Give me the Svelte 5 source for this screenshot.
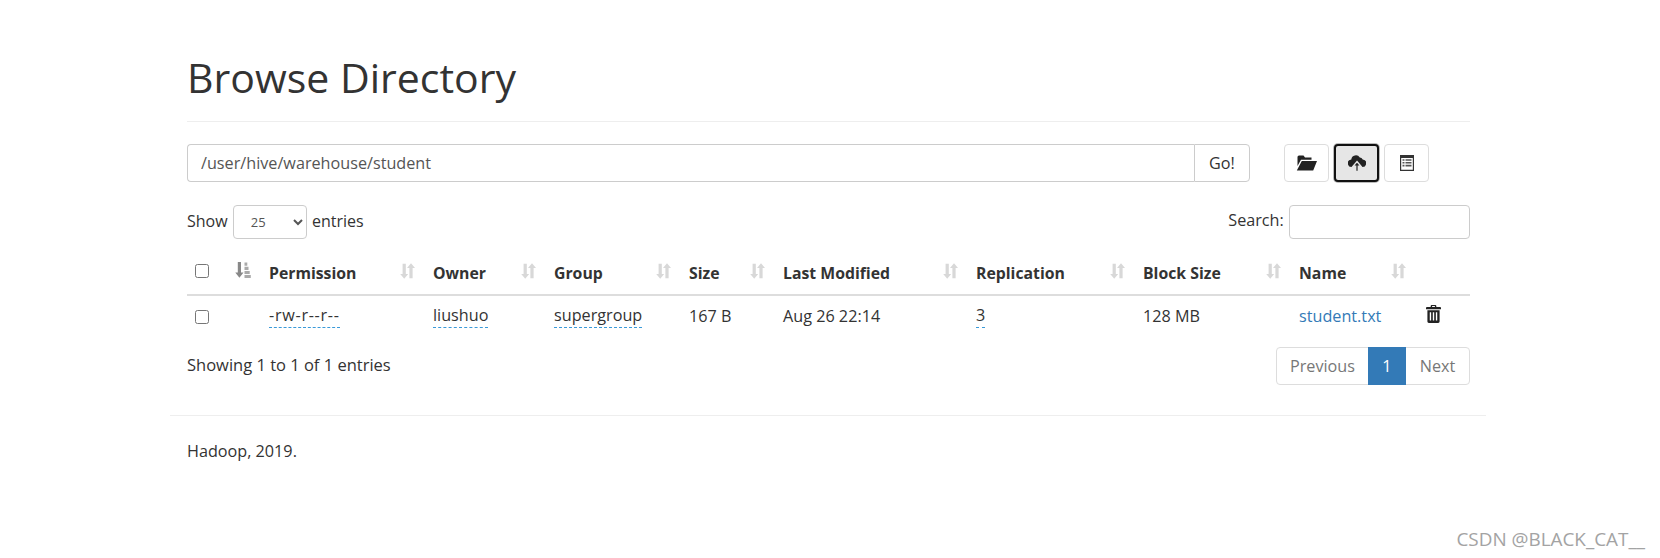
<script>
	const columns = [
		{ label: 'Permission', width: 164 },
		{ label: 'Owner', width: 121 },
		{ label: 'Group', width: 135 },
		{ label: 'Size', width: 94 },
		{ label: 'Last Modified', width: 193 },
		{ label: 'Replication', width: 167 },
		{ label: 'Block Size', width: 156 },
		{ label: 'Name', width: 125 }
	];
</script>

<div class="container">
	<div class="page-header">
		<h1>Browse Directory</h1>
	</div>

	<div class="path-row">
		<div class="input-group">
			<input class="path-input" type="text" value="/user/hive/warehouse/student" />
			<button class="btn go">Go!</button>
		</div>
		<div class="toolbar">
			<button class="btn icon-btn" aria-label="Create directory">
				<svg width="21" height="16" viewBox="0 0 21 16"><path fill="#222" d="M3 0.500h4.500l1.500 2h6.500v2.200H5L1.500 11V2a1.500 1.500 0 0 1 1.500-1.500zM5.800 6H21L17.200 15.500H0.800z" /></svg>
			</button>
			<button class="btn icon-btn active" aria-label="Upload files">
				<svg width="18" height="18" viewBox="0 0 18 18"><path fill="#222" d="M4 13A3.800 3.800 0 0 1 3.300 5.400 4.600 4.600 0 0 1 11.800 3.500A3.700 3.700 0 0 1 14.700 5.400 3.800 3.800 0 0 1 14 13z" /><path fill="#222" stroke="#e6e6e6" stroke-width="1.400" d="M9 7.500l4 4.700H10.300V17.500H7.700V12.200H5z" /></svg>
			</button>
			<button class="btn icon-btn" aria-label="Cut and paste">
				<svg width="14" height="16" viewBox="0 0 14 16"><path fill="#333" fill-rule="evenodd" d="M0 0h14v16H0zM1.200 3v11.800h11.600V3z" /><path fill="#555" d="M2.500 4.200h2v1.600h-2zM5.500 4.200h6v1.600h-6zM2.500 7h2v1.600h-2zM5.500 7h6v1.600h-6zM2.500 9.800h2v1.600h-2zM5.500 9.800h6v1.600h-6z" /></svg>
			</button>
		</div>
	</div>

	<div class="table-controls">
		<label class="length">
			Show
			<select>
				<option>25</option>
			</select>
			entries
		</label>
		<label class="search">
			Search:
			<input type="search" />
		</label>
	</div>

	<table>
		<colgroup>
			<col style="width: 38px" />
			<col style="width: 36px" />
			{#each columns as col}
				<col style="width: {col.width}px" />
			{/each}
			<col />
		</colgroup>
		<thead>
			<tr>
				<th class="check"><input type="checkbox" /></th>
				<th class="sort-only">
					<svg width="16" height="16" viewBox="0 0 16 16"><path fill="#888" d="M2.800 0h3.200v10.500H8.500L4.400 15.800 0.300 10.500H2.800z" /><path fill="#aaa" d="M9.500 0.500h2.800v3.200H9.500zM9.500 4.700h4v3.200H9.500zM9.500 8.900h5.200v3H9.500zM9.500 12.900h6.300v3H9.500z" /></svg>
				</th>
				{#each columns as col}
					<th>
						<div class="th-inner">
							<span>{col.label}</span>
							<svg class="sort" width="15" height="16" viewBox="0 0 15 16"><path fill="#d8d8d8" d="M2.600 0.800h3.200v10.200H8.200L4.200 15.800 0.200 11H2.600z" /><path fill="#d8d8d8" d="M11 0.200L15 5H12.600V15.200H9.400V5H7z" /></svg>
						</div>
					</th>
				{/each}
				<th></th>
			</tr>
		</thead>
		<tbody>
			<tr>
				<td class="check"><input type="checkbox" /></td>
				<td></td>
				<td><span class="info perm">-rw-r--r--</span></td>
				<td><span class="info">liushuo</span></td>
				<td><span class="info">supergroup</span></td>
				<td>167 B</td>
				<td>Aug 26 22:14</td>
				<td><span class="info">3</span></td>
				<td>128 MB</td>
				<td><a href="#top">student.txt</a></td>
				<td>
					<svg class="trash" width="15" height="18" viewBox="0 0 16 19"><path fill="#222" fill-rule="evenodd" d="M6 0h4a1 1 0 0 1 1 1v1h4a1 1 0 0 1 1 1v1.500H0V3a1 1 0 0 1 1-1h4V1a1 1 0 0 1 1-1zM6.500 1v1h3V1z" /><path fill="#222" fill-rule="evenodd" d="M1.500 5.500h13V17.500a1.500 1.500 0 0 1-1.500 1.500H3a1.500 1.500 0 0 1-1.500-1.500zM4 7.500v9h1.500v-9zM7.250 7.500v9h1.500v-9zM10.500 7.500v9H12v-9z" /></svg>
				</td>
			</tr>
		</tbody>
	</table>

	<div class="table-footer">
		<div class="summary">Showing 1 to 1 of 1 entries</div>
		<div class="pagination">
			<span class="page prev">Previous</span>
			<span class="page current">1</span>
			<span class="page next">Next</span>
		</div>
	</div>

	<hr />
	<div class="foot-text">Hadoop, 2019.</div>
</div>

<div class="watermark">CSDN @BLACK_CAT__</div>

<style>
	:global(body) {
		background: #fff;
		color: #333;
		font-family: "Open Sans", "Liberation Sans", sans-serif;
		font-size: 16.2px;
	}

	.container {
		width: 1316px;
		box-sizing: border-box;
		margin-left: 170px;
		padding: 55px 16px 0 17px;
	}

	.page-header {
		border-bottom: 1px solid #eee;
		padding-bottom: 22px;
	}

	h1 {
		margin: 0;
		font-size: 41px;
		font-weight: 400;
		line-height: 44px;
	}

	.path-row {
		display: flex;
		margin-top: 22px;
		height: 38px;
	}

	.input-group {
		display: flex;
		width: 1063px;
	}

	.path-input {
		flex: 1;
		box-sizing: border-box;
		min-width: 0;
		border: 1px solid #ccc;
		border-right: none;
		border-radius: 4px 0 0 4px;
		padding: 0 13px;
		font: inherit;
		color: #555;
	}

	.btn {
		box-sizing: border-box;
		background: #fff;
		border: 1px solid #ddd;
		border-radius: 4px;
		font: inherit;
		color: #333;
		padding: 0;
		display: flex;
		align-items: center;
		justify-content: center;
	}

	.go {
		width: 56px;
		border-color: #ccc;
		border-radius: 0 4px 4px 0;
	}

	.toolbar {
		display: flex;
		gap: 5px;
		margin-left: 34px;
	}

	.icon-btn {
		width: 45px;
		height: 38px;
	}

	.active {
		background: #e6e6e6;
		border: 2px solid #111;
		box-shadow: 0 0 0 1px #bbb;
	}

	.table-controls {
		display: flex;
		justify-content: space-between;
		align-items: center;
		margin-top: 23px;
		height: 34px;
		padding-bottom: 1px;
		box-sizing: content-box;
		margin-bottom: -1px;
	}

	.length {
		font-size: 16px;
	}

	.length select {
		width: 74px;
		height: 34px;
		margin: 0 1px;
		padding: 0 13px;
		background: #fff;
		border: 1px solid #ccc;
		border-radius: 4px;
		font-family: inherit;
		font-size: 13px;
		color: #555;
	}

	.search input {
		box-sizing: border-box;
		width: 181px;
		height: 34px;
		margin-left: 1px;
		border: 1px solid #ccc;
		border-radius: 4px;
		vertical-align: middle;
	}

	table {
		width: 100%;
		table-layout: fixed;
		border-collapse: collapse;
		margin-top: 9px;
	}

	th {
		height: 47px;
		padding: 3px 10px 0 8px;
		border-bottom: 2px solid #ddd;
		text-align: left;
		font-size: 15.8px;
		font-weight: 700;
		box-sizing: border-box;
	}

	.th-inner {
		display: flex;
		justify-content: space-between;
		align-items: center;
	}

	.sort {
		display: block;
		margin-top: -3px;
	}

	.sort-only svg {
		display: block;
		margin-top: -3px;
	}

	th.check, td.check {
		padding: 0 0 0 8px;
	}

	.check input {
		display: block;
		width: 14px;
		height: 14px;
		margin: 0;
	}

	th.sort-only {
		padding: 0 0 0 10px;
	}

	td {
		height: 42px;
		padding: 0 8px 2px;
		box-sizing: border-box;
		border: none;
	}

	.info {
		display: inline-block;
		border-bottom: 1px dashed #3a9ad9;
		line-height: 21px;
		padding-bottom: 1px;
	}

	.perm {
		letter-spacing: 0.7px;
	}

	a {
		color: #337ab7;
		text-decoration: none;
	}

	.trash {
		display: block;
		margin-top: -4px;
		margin-left: 2px;
	}

	.table-footer {
		display: flex;
		justify-content: space-between;
		align-items: center;
		margin-top: 10px;
	}

	.summary {
		font-size: 16.5px;
		padding-bottom: 4px;
	}

	.pagination {
		display: flex;
		height: 38px;
		border: 1px solid #ddd;
		border-radius: 4px;
		box-sizing: border-box;
	}

	.page {
		display: flex;
		align-items: center;
		justify-content: center;
		box-sizing: border-box;
		color: #777;
	}

	.prev {
		width: 91px;
	}

	.current {
		width: 38px;
		margin: -1px 0;
		background: #337ab7;
		color: #fff;
	}

	.next {
		width: 63px;
	}

	hr {
		margin: 30px -16px 0 -17px;
		border: none;
		border-top: 1px solid #eee;
	}

	.foot-text {
		margin-top: 24px;
	}

	.watermark {
		position: absolute;
		right: 15px;
		top: 526px;
		font-size: 18.9px;
		color: #a3a3a3;
	}
</style>
